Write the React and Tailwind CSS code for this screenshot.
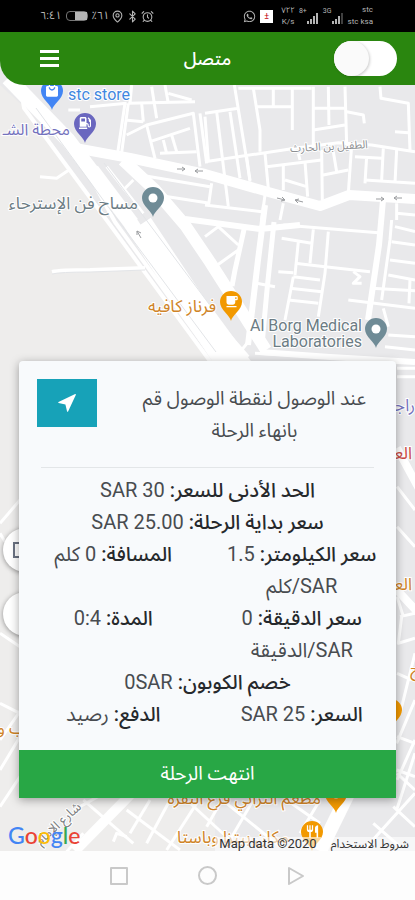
import React, { useState } from "react";
import { AlarmClock, Bluetooth, MapPin } from "lucide-react";
import { FaGasPump, FaWhatsapp } from "react-icons/fa";
import { MdLocalCafe, MdLocalMall, MdRestaurant } from "react-icons/md";

const ARABIC = "font-['Roboto','Noto_Sans_Arabic','DejaVu_Sans',sans-serif]";

// Streets are grouped by tile, each tile is drawn at a third of its own units
const TILES = [
    {
        id: "north-west",
        place: "translate(0 80) scale(0.3333)",
        roads: [
            "M350 240 L375 70",
            "M362 240 L385 70",
            "M205 90 H240 M270 80 L380 70",
            "M385 70 L585 65 M395 15 L390 70 M425 70 L430 125 M455 20 L470 115 M495 15 L505 70",
            "M505 40 L575 60",
            "M380 165 L440 135 L580 100 L600 260",
            "M375 120 L430 125 M440 135 L465 235 M450 185 L570 145 M490 180 L500 220 M515 165 L530 215",
            "M480 220 L590 215 M600 100 L620 250",
            "M120 290 L170 295 L210 268",
            "M420 285 L630 320 M470 345 L630 370 M370 330 L400 300",
            "M320 260 L430 400 M290 260 L410 420",
        ],
    },
    {
        id: "north-east",
        place: "translate(205 80) scale(0.3333)",
        roads: [
            "M0 100 L100 85 M88 15 L135 300 M145 25 L165 150 L165 215",
            "M100 25 H320 M205 25 V80 M150 80 H260 M262 25 V150",
            "M325 20 V195 M370 20 L372 135 M420 20 L425 195",
            "M325 85 H420 M325 150 L420 135 M425 95 L475 105 L478 130",
            "M525 20 L528 55 L610 70 L615 210 M570 155 L610 158",
            "M0 245 L270 205 L400 188 L500 195 L630 215",
            "M35 95 L70 380 M75 95 L105 295 M0 110 L10 240",
            "M125 230 L135 305 M180 220 L190 325 M185 260 L350 240",
            "M235 255 V330 M300 245 L308 350 M240 300 L305 320",
            "M350 210 L352 360 M385 215 L395 275 M355 285 L430 270",
            "M440 195 L430 340",
            "M450 230 L530 235 M485 230 L480 310 M535 205 L530 300",
            "M575 210 L570 310 M480 300 L630 310 M280 220 L285 240",
            "M20 310 L10 380 M0 375 L170 395 M180 345 L170 420",
            "M235 370 L225 420 M575 370 V420 M575 400 L630 405",
        ],
    },
    {
        id: "middle-east",
        place: "translate(205 220) scale(0.3333)",
        roads: [
            "M235 15 L520 38 M560 0 L555 60 L530 240 M570 20 L630 35",
            "M325 28 L315 130 M230 55 L320 70 M280 65 L270 165",
            "M220 155 L265 158 M270 130 L360 140 L495 155",
            "M370 35 L360 160 L340 290 M265 170 L345 180 M255 205 L350 215",
            "M265 170 L240 300 M250 240 L340 250 M445 155 L465 170 L445 190 L470 190",
            "M560 65 L630 75 M555 120 L630 130 M550 165 L630 180 M500 205 L630 212",
            "M615 180 L612 250 M430 240 L630 265 M535 265 L550 320",
            "M0 50 L40 20 L100 75 M30 140 L100 90 M155 190 L210 200",
            "M550 345 L630 350 M540 380 L630 390 M150 400 L630 425",
            "M110 390 L130 365 M60 330 L130 410",
        ],
    },
    {
        id: "south",
        place: "translate(0 700) scale(0.3333)",
        roads: [
            "M0 10 L60 40 M0 120 L70 20 M0 210 L60 110 M0 320 L70 215",
            "M240 320 L330 270 M250 300 L400 430 M380 330 L540 450",
            "M390 400 L450 300 M440 430 L510 300 M500 450 L590 310",
            "M340 425 L350 400 L380 410 M200 455 L250 400",
            "M560 300 L690 420 M620 380 L660 310 M690 420 L760 300",
            "M680 310 L840 440 M860 300 L960 370 M900 400 L960 300",
            "M1100 440 L1245 280 M1180 320 L1245 380 M1120 370 L1200 440",
            "M1190 130 L1245 0 M1190 210 L1245 230 M1190 330 L1245 160",
        ],
    },
    {
        id: "side-streets",
        place: "translate(375 360) scale(0.3333)",
        roads: [
            "M66 25 H120 M66 50 H120 M66 380 L120 450 M66 500 L120 560",
            "M66 710 L85 770 M75 770 L120 760 M80 770 L70 850 L120 835",
            "M66 940 L110 960 M120 880 L75 1060 M66 1130 L120 1150",
            "M66 1260 L120 1140 M66 1240 L120 1290",
        ],
    },
    {
        id: "west",
        place: "translate(0 470) scale(0.3333)",
        roads: ["M0 160 L60 90", "M0 190 L15 215", "M0 490 L60 530"],
    },
];

const Pin = ({ x, y, fill, children }) => (
    <g transform={`translate(${x} ${y})`}>
        <path
            d="M0 19 C-1 13 -11 8 -11 0 A11 11 0 1 1 11 0 C11 8 1 13 0 19 Z"
            fill={fill}
        />
        {children || <circle r="4.5" fill="#fff" />}
    </g>
);

const Label = ({ x, y, fill, size = 17, anchor = "end", rotate = 0, children }) => (
    <text
        x={x}
        y={y}
        fill={fill}
        fontSize={size}
        textAnchor={anchor}
        stroke="#fff"
        strokeWidth="2"
        paintOrder="stroke"
        transform={`rotate(${rotate} ${x} ${y})`}
    >
        {children}
    </text>
);

const CityMap = () => (
    <svg
        className={`absolute inset-0 w-full h-full ${ARABIC}`}
        viewBox="0 32 415 819"
        preserveAspectRatio="xMidYMin slice"
        aria-label="Map"
    >
        <rect y="32" width="415" height="819" fill="#e9e9eb" />
        <path d="M0 85 L30 112 L215 370 L215 851 L0 851 Z" fill="#eeedec" />

        {/* Small streets */}
        {TILES.map((tile) => (
            <g
                key={tile.id}
                transform={tile.place}
                fill="none"
                stroke="#fff"
                strokeWidth="9"
                strokeLinejoin="round"
            >
                {tile.roads.map((d) => (
                    <path key={d} d={d} />
                ))}
            </g>
        ))}

        {/* Highway and the main roads leaving it */}
        <g fill="none" stroke="#fff" strokeLinejoin="round">
            <path d="M8 78 L68 140 L130 222 L230 375" strokeWidth="15" />
            <path d="M20 85 L24 108 L108 222 L218 372" strokeWidth="4" />
            <path d="M65 130 L115 222 L215 360" strokeWidth="4" />
            <path d="M140 225 L190 300 L245 375" strokeWidth="26" />
            <path d="M75 148 L130 158 L205 174 L272 193 L320 206 L349 195 L415 199" strokeWidth="10" />
            <path d="M123 160 L155 190 L185 225 L210 262 L266 350" strokeWidth="12" />
            <path d="M185 219 L260 229 L300 225 M265 205 L258 260 L248 345" strokeWidth="6" />
            <path d="M274 222 L267 290 L262 345 M245 225 L235 270 L232 286" strokeWidth="5" />
            <path d="M383 200 L379 245 L368 320" strokeWidth="6" />
            <path d="M260 352 L330 357 L415 362" strokeWidth="6" />
            <path d="M52 272 Q60 270 90 270 L145 268" strokeWidth="4" />
            <path d="M75 851 L135 790" strokeWidth="10" />
            <path d="M320 851 L350 790" strokeWidth="14" />
            <path d="M397 448 L425 500 M397 590 L425 620" strokeWidth="8" />
        </g>
        <g fill="none" stroke="#e3e5e8" strokeWidth="1">
            <path d="M36 108 L112 212 L216 352" />
            <path d="M104 163 L150 225 L212 308" />
            <path d="M52 274 Q60 272 90 272 L145 270" />
        </g>

        {/* One way arrows */}
        <g fill="none" stroke="#9a9c9f" strokeWidth="1">
            <path d="M177 169 h8 m-3 -2 l3 2 l-3 2 M203 171 h-8 m3 -2 l-3 2 l3 2" />
            <path d="M277 198 l8 2 m-3 -3 l3 3 l-4 1 M303 202 l-8 -2 m4 -1 l-4 1 l3 3" />
            <path d="M376 199 h8 m-3 -2 l3 2 l-3 2 M402 198 h-8 m3 -2 l-3 2 l3 2" />
            <path d="M141 238 l-4 -7 m0 4 l0 -4 l4 2" />
        </g>

        <Label x={368} y={148} size={11} rotate={-3} fill="#8d8f92">الطفيل بن الحارث</Label>
        <Label x={82} y={808} size={13} rotate={-42} fill="#7b7d80">شارع الإمام</Label>

        <Label x={68} y={100} size={16} anchor="start" fill="#3f87df">stc store</Label>
        <Pin x={52} y={91} fill="#4285f4">
            <MdLocalMall x="-8" y="-9" size={16} color="#fff" />
        </Pin>

        <Label x={70} y={135} size={16} fill="#7472bd">محطة الشـ</Label>
        <Pin x={85} y={124} fill="#6a67bf">
            <FaGasPump x="-6" y="-7" size={12} color="#fff" />
        </Pin>

        <Label x={138} y={209} fill="#6c7c84">مساح فن الإسترحاء</Label>
        <Pin x={153} y={198} fill="#6f8b96" />

        <Label x={216} y={312} fill="#cf8428">فرناز كافيه</Label>
        <Pin x={231} y={302} fill="#f29900">
            <MdLocalCafe x="-7" y="-8" size={15} color="#fff" />
        </Pin>

        <Label x={362} y={331} size={16} fill="#6c7c84">Al Borg Medical</Label>
        <Label x={362} y={347} size={16} fill="#6c7c84">Laboratories</Label>
        <Pin x={376} y={329} fill="#6f8b96" />

        <Label x={415} y={411} fill="#7472bd">راجـ</Label>
        <Label x={412} y={459} fill="#cb4b45">العـ</Label>
        <Label x={412} y={590} fill="#cf8428">العـ</Label>
        <Label x={421} y={675} fill="#cf8428">ح</Label>
        <Pin x={391} y={710} fill="#f29900" />
        <Label x={26} y={734} fill="#cf8428">ب و</Label>

        <Label x={321} y={804} fill="#cf8428">مطعم التراثي فرع النقرة</Label>
        <Pin x={336} y={794} fill="#f29900" />
        <Label x={289} y={843} fill="#cf8428">مكان بيتزا وباستا</Label>
        <Pin x={312} y={832} fill="#f29900">
            <MdRestaurant x="-7" y="-8" size={15} color="#fff" />
        </Pin>
    </svg>
);

const Signal = ({ bars, name }) => (
    <span className="flex items-start">
        <span className="text-[7px] leading-none">{name}</span>
        <svg className="mt-1 w-3 h-3" viewBox="0 0 12 12" fill="#b5b5b5" aria-hidden="true">
            {[3, 5, 8, 11].map((h, i) => (
                <rect key={h} x={i * 3} y={12 - h} width="2" height={h} opacity={i < bars ? 1 : 0.35} />
            ))}
        </svg>
    </span>
);

const StatusBar = () => (
    <div className={`flex items-center justify-between h-8 pl-10 pr-[42px] bg-black text-[#b5b5b5] ${ARABIC}`}>
        <div className="flex items-center gap-1 text-[11px]">
            <span>٦:٤١</span>
            <span className="flex items-center justify-end w-[22px] h-[10px] rounded-sm border border-[#777]">
                <span className="w-3 h-2 bg-[#b5b5b5]" />
            </span>
            <span className="flex items-center gap-[2px]">
                <span>٪٦١</span>
                <MapPin size={13} />
                <Bluetooth size={13} />
                <AlarmClock size={13} />
            </span>
        </div>
        <div className="flex items-center gap-1">
            <FaWhatsapp size={13} />
            <span className="flex items-center justify-center w-[13px] h-[13px] bg-white text-[9px] leading-none text-red-700">
                ±
            </span>
            <span className="flex flex-col items-center ml-1 text-[8px] leading-[11px]">
                <span>٧٢٢</span>
                <span>K/s</span>
            </span>
            <Signal name="8+" bars={4} />
            <Signal name="3G" bars={3} />
            <span className="flex flex-col items-end text-[8px] leading-[12px]">
                <span>stc</span>
                <span>stc ksa</span>
            </span>
        </div>
    </div>
);

const Header = () => {
    const [online, setOnline] = useState(false);

    return (
        <header
            dir="rtl"
            className="relative z-10 grid grid-cols-3 items-center h-[53px] px-[18px] rounded-bl-3xl bg-[#2a860f] text-white"
        >
            <label className="relative justify-self-start w-[63px] h-[35px] rounded-full bg-white cursor-pointer">
                <span className="sr-only">متصل</span>
                <input
                    type="checkbox"
                    role="switch"
                    checked={online}
                    onChange={(e) => setOnline(e.target.checked)}
                    className="peer sr-only"
                />
                <span className="absolute top-0 left-0 w-[35px] h-[35px] rounded-full bg-[#fafafa] shadow-[1px_1px_3px_rgba(0,0,0,0.2)] transition-transform peer-checked:translate-x-7" />
            </label>
            <h1 className="justify-self-center text-lg font-medium">متصل</h1>
            <button type="button" aria-label="القائمة" className="justify-self-end flex flex-col gap-1 mx-[22px]">
                <span className="w-[19px] h-[3px] bg-white" />
                <span className="w-[19px] h-[3px] bg-white" />
                <span className="w-[19px] h-[3px] bg-white" />
            </button>
        </header>
    );
};

const Item = ({ label, children, wide }) => (
    <div className={wide ? "col-span-2 px-4" : "px-4"}>
        <dt className="inline font-medium text-[#26292c]">{label}:</dt>{" "}
        <dd className="inline">{children}</dd>
    </div>
);

const TripCard = () => (
    <section
        dir="rtl"
        className="relative mx-[19px] rounded-t-sm bg-[#f8fafc] text-center text-xl leading-8 text-[#484c50] shadow-[0_2px_10px_rgba(0,0,0,0.35)]"
    >
        <div className="flex items-start pt-[18px] pl-[18px]">
            <p className="flex-1 mt-1 pl-9 pr-5 text-[19px] leading-8">
                عند الوصول لنقطة الوصول قم بانهاء الرحلة
            </p>
            <button
                type="button"
                aria-label="الملاحة"
                className="flex items-center justify-center w-[60px] h-12 bg-[#17a2b8] text-white"
            >
                <svg className="w-[18px] h-[18px]" viewBox="0 0 18 18" fill="currentColor" aria-hidden="true">
                    <path d="M17.2 0.1 L0.5 7.9 Q-0.1 8.5 0.6 8.9 L7.4 10.6 L9.1 17.4 Q9.5 18.1 10.1 17.5 L17.9 0.8 Q18 0 17.2 0.1 Z" />
                </svg>
            </button>
        </div>

        <hr className="mt-5 mx-[22px] border-[#e3e6e8]" />

        <dl className="grid grid-cols-2 pt-[6px] pb-5">
            <Item label="الحد الأدنى للسعر" wide><bdi dir="ltr">SAR 30</bdi></Item>
            <Item label="سعر بداية الرحلة" wide><bdi dir="ltr">SAR 25.00</bdi></Item>
            <Item label="سعر الكيلومتر">1.5 SAR/كلم</Item>
            <Item label="المسافة">0 كلم</Item>
            <Item label="سعر الدقيقة">0 SAR/الدقيقة</Item>
            <Item label="المدة">0:4</Item>
            <Item label="خصم الكوبون" wide>0SAR</Item>
            <Item label="السعر"><bdi dir="ltr">SAR 25</bdi></Item>
            <Item label="الدفع">رصيد</Item>
        </dl>

        <button type="button" className="w-full h-12 bg-[#28a745] text-[19px] text-white">
            انتهت الرحلة
        </button>
    </section>
);

const App = () => {
    return (
        <div className={`flex flex-col min-h-screen bg-white ${ARABIC}`}>
            <StatusBar />

            <div className="relative flex flex-col flex-1 overflow-hidden">
                <CityMap />
                <Header />

                <main className="flex flex-col flex-1 justify-end pt-6">
                    <div className="relative">
                        {/* Map controls, partly under the card */}
                        <div className="absolute top-[167px] left-[3px] flex flex-col gap-5">
                            <button type="button" aria-label="Map layers" className="flex items-center justify-center w-11 h-11 rounded-full bg-white shadow-[0_1px_5px_rgba(0,0,0,0.4)]">
                                <span className="w-6 h-4 border-2 border-gray-500" />
                            </button>
                            <button type="button" aria-label="My location" className="w-11 h-11 rounded-full bg-white shadow-[0_1px_5px_rgba(0,0,0,0.4)]" />
                        </div>
                        <TripCard />
                    </div>

                    <div className="relative flex items-end justify-between h-[53px] pl-2">
                        <span className="mb-1 font-['Lato'] text-[23px] leading-none font-medium">
                            <span className="text-[#4285f4]">G</span>
                            <span className="text-[#ea4335]">o</span>
                            <span className="text-[#fbbc05]">o</span>
                            <span className="text-[#4285f4]">g</span>
                            <span className="text-[#34a853]">l</span>
                            <span className="text-[#ea4335]">e</span>
                        </span>
                        <span className="flex text-[13px] leading-[14px] text-[#333]">
                            <span className="px-1 bg-white/60">Map data ©2020</span>
                            <a href="#terms" className="ml-1 px-[6px] bg-white/60 text-xs leading-[14px]">شروط الاستخدام</a>
                        </span>
                    </div>
                </main>
            </div>

            <nav className="flex items-center justify-center gap-[70px] h-[49px] bg-[#fdfdfd]">
                <button type="button" aria-label="Recent apps">
                    <span className="block w-[18px] h-[18px] border-2 border-[#c9c9c9] rounded-[1px]" />
                </button>
                <button type="button" aria-label="Home">
                    <span className="block w-[19px] h-[19px] border-2 border-[#c9c9c9] rounded-full" />
                </button>
                <button type="button" aria-label="Back">
                    <svg className="w-[18px] h-5" viewBox="0 0 18 20" fill="none" stroke="#c9c9c9" strokeWidth="2" strokeLinejoin="round">
                        <path d="M2 2 L16 10 L2 18 Z" />
                    </svg>
                </button>
            </nav>
        </div>
    );
};

export default App;
